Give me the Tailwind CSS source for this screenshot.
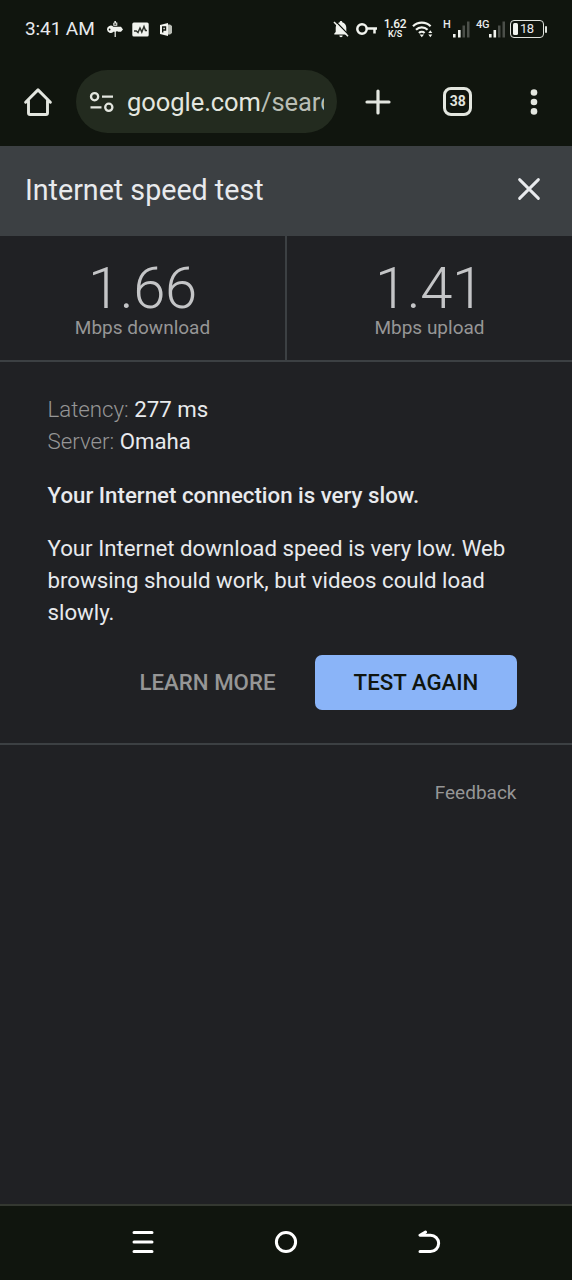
<!DOCTYPE html>
<html lang="en">
<head>
<meta charset="utf-8">
<title>Internet speed test</title>
<script src="https://cdn.jsdelivr.net/npm/@tailwindcss/browser@4"></script>
</head>
<body class="bg-[#202124]">
<div class="flex h-[1280px] w-[572px] flex-col overflow-hidden bg-[#202124] font-[Roboto,sans-serif] text-[#e8eaed]">

  <!-- Status bar -->
  <div class="flex h-[58px] shrink-0 items-center bg-[#10150e] pl-[25px]">
    <span class="w-[82px] whitespace-nowrap text-[19px] leading-6 tracking-[-0.1px]">3:41 AM</span>
    <svg class="h-4 w-4 shrink-0" viewBox="0 0 16 16" fill="#f1f3ee"><path d="M0 8.500a3.700 3.700 0 0 1 6.400-2.700H14l2 2.700-2 2.200h-3l-1-.8-1 .8H6.400A3.700 3.700 0 0 1 0 8.500z"/><circle cx="2.600" cy="8.500" r=".9" fill="#10150e"/><path d="M7.400 0h1.500v1.500h1.400v3.200h-4V1.700h1.100zM7.600 10h1.200v6H7.600z"/><path d="M7.300 2.500h2v1.200h-2z" fill="#10150e"/></svg>
    <svg class="ml-[9px] h-[15px] w-[17px] shrink-0" viewBox="0 0 17 15"><rect x=".3" y=".5" width="16.400" height="14" rx="1.500" fill="#f1f3ee"/><path d="M2 9h2.300l1.700 1.500 2-4.500 1.800 4L12 4.500l1.500 4H15" fill="none" stroke="#30352e" stroke-width="1.500"/></svg>
    <svg class="ml-[11px] h-[13px] w-3 shrink-0" viewBox="0 0 12 13"><path d="M7 1.500h3L12 3v7l-2 1.500H7z" fill="#b9bdb5"/><path d="M0 2l8-2v13L0 11z" fill="#f1f3ee"/><path d="M2.700 9.500V4h2.800v3H3" fill="none" stroke="#10150e" stroke-width="1.400"/></svg>

    <svg class="ml-[161px] h-[18px] w-4 shrink-0" viewBox="0 0 16 18"><path d="M8 1c.8 0 1.300.5 1.300 1.300C11.700 3 13.300 5 13.300 7.500V12l1.400 1.600v.9H1.300v-.9L2.700 12V7.500C2.700 5 4.300 3 6.700 2.300 6.700 1.500 7.200 1 8 1zM6.300 15.500h3.400a1.700 1.700 0 0 1-3.400 0z" fill="#f1f3ee"/><path d="M2.200 1l14 14.300" stroke="#10150e" stroke-width="1.300"/><path d="M1 2l14 14.300" stroke="#f1f3ee" stroke-width="1.500"/></svg>
    <svg class="ml-[7px] h-[14px] w-[22px] shrink-0" viewBox="0 0 22 14" fill="none" stroke="#f1f3ee" stroke-width="2.500"><circle cx="6" cy="7" r="4.700"/><path d="M10.500 6.500H21M18.500 6v5.500"/></svg>
    <div class="ml-[5px] flex w-[24px] shrink-0 flex-col items-center text-[#f1f3ee]">
      <span class="text-[12px] leading-[10px] font-medium tracking-[-0.3px]">1.62</span>
      <span class="text-[9px] leading-[10px] font-semibold tracking-[-0.2px]">K/S</span>
    </div>
    <svg class="ml-[5px] h-[18px] w-[22px] shrink-0" viewBox="0 0 22 18" fill="none" stroke="#f1f3ee" stroke-width="2.200"><path d="M1 6.200a12.600 12.600 0 0 1 17.600 0M4 9.800a8.300 8.300 0 0 1 11.600 0M7 13a4 4 0 0 1 5.600 0"/><path d="M9.800 17.200l-2.200-2.600h4.400z" fill="#f1f3ee" stroke="none"/><path d="M18.300 10.200l2 2.900h-4zM18.300 17.300l2-2.900h-4z" fill="#f1f3ee" stroke="none"/></svg>
    <span class="ml-[9px] w-[9px] pb-2 text-[11px] leading-3 font-medium">H</span>
    <svg class="h-[18px] w-[18px] shrink-0" viewBox="0 0 18 18"><path d="M1 14h2.600v3.500H1zM6 10h2.600v7.500H6z" fill="#f1f3ee"/><path d="M10.500 5.500H13v12h-2.500zM15 1.500h2.500v16H15z" fill="#4b4f49"/></svg>
    <span class="ml-[6px] w-[12px] whitespace-nowrap pb-2 text-[11px] leading-3 font-medium tracking-[-0.3px]">4G</span>
    <svg class="h-[18px] w-[18px] shrink-0" viewBox="0 0 18 18"><path d="M1 14h2.600v3.500H1zM5.500 10h2.600v7.500H5.500z" fill="#f1f3ee"/><path d="M10 5.500h2.500v12H10zM14.500 1.500H17v16h-2.500z" fill="#4b4f49"/></svg>
    <div class="ml-[4px] flex h-[18px] w-[34px] shrink-0 items-center rounded-[4px] border-[1.500px] border-[#dfe2dc] pl-[2px]">
      <span class="h-[12px] w-[5px] rounded-[1.500px] bg-[#f1f3ee]"></span>
      <span class="ml-[2px] text-[13px] leading-3 tracking-[-0.5px]">18</span>
    </div>
    <span class="ml-px h-[7px] w-[2px] rounded-sm bg-[#dfe2dc]"></span>
  </div>

  <!-- Browser toolbar -->
  <div class="flex h-[88px] shrink-0 items-center bg-[#10150e] pb-px pl-[23px]">
    <svg class="h-[30px] w-[30px] shrink-0" viewBox="0 0 30 30" fill="none" stroke="#e3e6df" stroke-width="2.900" stroke-linejoin="round" stroke-linecap="round"><path d="M2.600 15.300L15 2.900l12.400 12.400M5.500 13.500V26q0 1.500 1.500 1.500h16q1.500 0 1.500-1.500V13.500"/></svg>
    <div class="ml-[23px] flex h-[63px] w-[261px] shrink-0 items-center rounded-full bg-[#232b1f] pl-[13px]">
      <svg class="h-[22px] w-[26px] shrink-0" viewBox="0 0 26 22" fill="none" stroke="#e3e6df" stroke-width="2.300"><circle cx="5.600" cy="5.700" r="3.600"/><path d="M13 5.700h11M1.500 16.300h11"/><circle cx="19.800" cy="16.300" r="3.600"/></svg>
      <div class="ml-[12px] w-[197px] overflow-hidden pt-px whitespace-nowrap text-[25.500px] leading-[34px] tracking-[-0.05px] text-[#e3e6df]">google.com<span class="text-[#b9beb5]">/search</span></div>
    </div>
    <svg class="ml-[28px] h-[26px] w-[26px] shrink-0" viewBox="0 0 26 26" stroke="#e3e6df" stroke-width="3.200" stroke-linecap="round"><path d="M13 2v22M2 13h22"/></svg>
    <div class="ml-[52px] flex h-[29px] w-[29px] shrink-0 items-center justify-center rounded-[8px] border-[3px] border-[#e3e6df] text-[15.500px] leading-none font-bold text-[#e3e6df]"><span class="scale-x-[0.9] tracking-[-0.2px]">38</span></div>
    <svg class="ml-[58px] h-[28px] w-[8px] shrink-0" viewBox="0 0 8 28" fill="#e3e6df"><circle cx="4" cy="4.500" r="3.300"/><circle cx="4" cy="14" r="3.300"/><circle cx="4" cy="23.400" r="3.300"/></svg>
  </div>

  <!-- Panel header -->
  <div class="flex h-[90px] shrink-0 items-center justify-between bg-[#3c4043] pr-[31px] pb-[4px] pl-[25px]">
    <h1 class="pt-px text-[28.650px] leading-9">Internet speed test</h1>
    <svg class="h-[24px] w-[24px]" viewBox="0 0 24 24" stroke="#e8eaed" stroke-width="2.900" stroke-linecap="round"><path d="M2.600 2.600l18.800 18.800M21.400 2.600L2.600 21.400"/></svg>
  </div>

  <!-- Results -->
  <div class="grid h-[126px] shrink-0 grid-cols-[287px_285px] border-b-[2px] border-[#3c4043] text-center">
    <div class="border-r-[2px] border-[#3c4043] pt-[23px]">
      <div class="h-[57px] text-[58px] leading-[58px] font-light tracking-[-0.4px] text-[#c4c5c7]">1.66</div>
      <div class="text-[19px] leading-[23px] text-[#969696]">Mbps download</div>
    </div>
    <div class="pt-[23px]">
      <div class="h-[57px] text-[58px] leading-[58px] font-light tracking-[-0.4px] text-[#c4c5c7]">1.41</div>
      <div class="text-[19px] leading-[23px] text-[#969696]">Mbps upload</div>
    </div>
  </div>

  <!-- Details -->
  <div class="flex h-[383px] shrink-0 flex-col border-b-[2px] border-[#3c4043] pt-[31px] pr-[55px] pl-[47.500px] text-[22.250px] leading-8">
    <div class="whitespace-nowrap"><span class="font-light text-[#969696]">Latency:</span> 277 ms</div>
    <div class="whitespace-nowrap"><span class="font-light text-[#969696]">Server:</span> Omaha</div>
    <div class="mt-[22px] font-medium whitespace-nowrap">Your Internet connection is very slow.</div>
    <div class="mt-[21px] whitespace-nowrap">Your Internet download speed is very low. Web<br>browsing should work, but videos could load<br>slowly.</div>
    <div class="mt-[27px] flex items-center justify-end font-medium">
      <span class="pb-[2px] text-[#969696]">LEARN MORE</span>
      <span class="ml-[39.500px] flex h-[55px] w-[202px] items-center justify-center rounded-[7px] bg-[#8ab4f8] pb-[2px] text-[#10150e]">TEST AGAIN</span>
    </div>
  </div>
  <div class="flex-1 pt-[36px] pr-[55.500px] text-right text-[19px] leading-6 text-[#969696]">Feedback</div>

  <!-- Navigation bar -->
  <div class="flex h-[76px] shrink-0 items-center border-t-[2px] border-[#343831] bg-[#10150e] pb-[2px] pl-[132px]">
    <svg class="h-[24px] w-[22px]" viewBox="0 0 22 24" stroke="#fff" stroke-width="3" stroke-linecap="round"><path d="M2 2.500h18M2 12h18M2 21.500h18"/></svg>
    <svg class="ml-[120px] h-[24px] w-[24px]" viewBox="0 0 24 24" fill="none" stroke="#fff" stroke-width="3"><circle cx="12" cy="12" r="9.600"/></svg>
    <svg class="ml-[119px] h-[24px] w-[24px]" viewBox="0 0 24 24" fill="none" stroke="#fff" stroke-width="3" stroke-linecap="round" stroke-linejoin="round"><path d="M8.500 2L3 5.200h10.500a8.100 8.100 0 0 1 0 16.300H3"/></svg>
  </div>
</div>
</body>
</html>
